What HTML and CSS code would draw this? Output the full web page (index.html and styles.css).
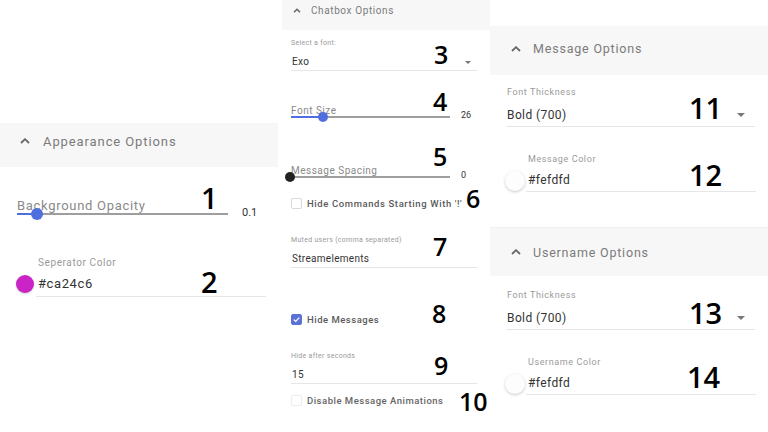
FILE: index.html
```html
<!DOCTYPE html>
<html>
<head>
<meta charset="utf-8">
<link rel="stylesheet" href="styles.css">
</head>
<body>
<div class="page">

  <!-- LEFT PANEL -->
  <section class="panel panel-left">
    <div class="header header-lg">
      <svg class="chev" width="10" height="6" viewBox="0 0 10 6"><polyline points="1,5 5,1.2 9,5" fill="none" stroke="#666" stroke-width="1.8"/></svg>
      <span class="title">Appearance Options</span>
    </div>
    <div class="body body-left">
      <div class="slider slider-lg s-opacity">
        <div class="s-label">Background Opacity</div>
        <div class="s-row">
          <div class="track"><div class="fill" style="width:20px"></div><div class="thumb" style="left:20px"></div></div>
          <span class="s-val">0.1</span>
        </div>
      </div>
      <div class="colorfield cf-lg cf-sep">
        <span class="swatch swatch-mag"></span>
        <div class="cf-input">
          <div class="f-label">Seperator Color</div>
          <div class="f-value">#ca24c6</div>
        </div>
      </div>
    </div>
    <span class="num num-lg n1">1</span>
    <span class="num num-lg n2">2</span>
  </section>

  <!-- MIDDLE PANEL -->
  <section class="panel panel-mid">
    <div class="header header-sm">
      <svg class="chev" width="8" height="5" viewBox="0 0 8 5"><polyline points="1,4.2 4,1.2 7,4.2" fill="none" stroke="#666" stroke-width="1.5"/></svg>
      <span class="title">Chatbox Options</span>
    </div>
    <div class="body body-mid">
      <div class="field field-sm f-font">
        <div class="f-label">Select a font:</div>
        <div class="f-value">Exo <span class="caret"></span></div>
      </div>
      <div class="slider slider-sm s-size">
        <div class="s-label">Font Size</div>
        <div class="s-row">
          <div class="track"><div class="fill" style="width:32px"></div><div class="thumb" style="left:32px"></div></div>
          <span class="s-val">26</span>
        </div>
      </div>
      <div class="slider slider-sm s-spacing">
        <div class="s-label">Message Spacing</div>
        <div class="s-row">
          <div class="track"><div class="thumb thumb-dark" style="left:-1px"></div></div>
          <span class="s-val">0</span>
        </div>
      </div>
      <label class="check c-cmd"><span class="box"></span><span>Hide Commands Starting With '!'</span></label>
      <div class="field field-sm f-muted">
        <div class="f-label">Muted users (comma separated)</div>
        <div class="f-value">Streamelements</div>
      </div>
      <label class="check c-hide"><span class="box box-on"><svg width="9" height="9" viewBox="0 0 9 9"><polyline points="1.8,4.6 3.7,6.4 7.3,2.6" fill="none" stroke="#fff" stroke-width="1.3"/></svg></span><span>Hide Messages</span></label>
      <div class="field field-sm f-secs">
        <div class="f-label">Hide after seconds</div>
        <div class="f-value">15</div>
      </div>
      <label class="check c-anim"><span class="box box-faint"></span><span>Disable Message Animations</span></label>
    </div>
    <span class="num num-sm n3">3</span>
    <span class="num num-sm n4">4</span>
    <span class="num num-sm n5">5</span>
    <span class="num num-sm n6">6</span>
    <span class="num num-sm n7">7</span>
    <span class="num num-sm n8">8</span>
    <span class="num num-sm n9">9</span>
    <span class="num num-sm n10">10</span>
  </section>

  <!-- RIGHT PANEL -->
  <section class="panel panel-right">
    <div class="group group-msg">
      <div class="header header-md header-msg">
        <svg class="chev" width="10" height="6" viewBox="0 0 10 6"><polyline points="1,5 5,1.2 9,5" fill="none" stroke="#666" stroke-width="1.8"/></svg>
        <span class="title">Message Options</span>
      </div>
      <div class="body body-right">
        <div class="field field-md f-thick">
          <div class="f-label">Font Thickness</div>
          <div class="f-value">Bold (700) <span class="caret"></span></div>
        </div>
        <div class="colorfield cf-md cf-msg">
          <span class="swatch swatch-white"></span>
          <div class="cf-input">
            <div class="f-label">Message Color</div>
            <div class="f-value">#fefdfd</div>
          </div>
        </div>
      </div>
    </div>
    <div class="group group-user">
      <div class="header header-md">
        <svg class="chev" width="10" height="6" viewBox="0 0 10 6"><polyline points="1,5 5,1.2 9,5" fill="none" stroke="#666" stroke-width="1.8"/></svg>
        <span class="title">Username Options</span>
      </div>
      <div class="body body-right">
        <div class="field field-md f-thick2">
          <div class="f-label">Font Thickness</div>
          <div class="f-value">Bold (700) <span class="caret"></span></div>
        </div>
        <div class="colorfield cf-md cf-user">
          <span class="swatch swatch-white"></span>
          <div class="cf-input">
            <div class="f-label">Username Color</div>
            <div class="f-value">#fefdfd</div>
          </div>
        </div>
      </div>
    </div>
    <span class="num num-lg n11">11</span>
    <span class="num num-lg n12">12</span>
    <span class="num num-lg n13">13</span>
    <span class="num num-lg n14">14</span>
  </section>

</div>
</body>
</html>
```

FILE: styles.css
```css
* { box-sizing: border-box; }
html, body { margin: 0; padding: 0; background: #fff; }
body { font-family: Roboto, "Liberation Sans", sans-serif; color: #333; }

.page {
  display: flex;
  width: 768px;
  height: 432px;
  overflow: hidden;
}

.panel { position: relative; height: 432px; }
.panel-left { width: 278px; padding-top: 123px; }
.panel-mid { width: 208px; margin-left: 4px; }
.panel-right { width: 278px; padding-top: 26px; }

/* headers */
.header {
  display: flex;
  align-items: center;
  background: #f7f7f7;
}
.header .title { color: #7b7b7b; }
.header-lg { height: 44px; padding-left: 20px; padding-bottom: 8px; }
.header-lg .chev { margin-right: 13px; }
.header-lg .title { font-size: 13px; letter-spacing: 0.9px; }

.header-sm { height: 30px; padding-left: 11px; padding-bottom: 10px; }
.header-sm .chev { margin-right: 10px; }
.header-sm .title { font-size: 10px; letter-spacing: 0.6px; }

.header-md { height: 48px; padding-left: 21px; }
.header-msg { height: 49px; padding-bottom: 4px; }
.header-md .chev { margin-right: 12px; }
.header-md .title { font-size: 12.5px; letter-spacing: 0.8px; }

/* bodies */
.body-left { padding: 0 12px 0 17px; }
.body-mid { padding: 0 13px 0 9px; }
.body-right { padding: 0 12px 0 17px; }

/* sliders */
.s-label { color: #8a8a8a; white-space: nowrap; }
.s-row { display: flex; align-items: center; }
.track { position: relative; height: 2px; background: #9e9e9e; }
.fill { position: absolute; left: 0; top: 0; height: 2px; background: #4f6fe0; }
.thumb {
  position: absolute;
  top: 50%;
  border-radius: 50%;
  background: #4f6fe0;
  transform: translate(-50%, -50%);
}
.thumb-dark { background: #222; }
.s-val { color: #333; }

.slider-lg .s-label { font-size: 13px; line-height: 14px; letter-spacing: 0.7px; }
.slider-lg .s-row { height: 10px; margin-top: -4px; }
.slider-lg .track { width: 211px; margin-right: 14px; }
.slider-lg .thumb { width: 12px; height: 12px; }
.slider-lg .s-val { font-size: 11px; margin-top: -3px; }
.s-opacity { margin-top: 32px; }

.slider-sm .s-label { font-size: 10px; line-height: 12px; letter-spacing: 0.5px; }
.slider-sm .s-row { height: 8px; margin-top: -4px; }
.slider-sm .track { width: 159px; margin-right: 11px; }
.slider-sm .thumb { width: 10px; height: 10px; }
.slider-sm .s-val { font-size: 9px; margin-top: -4px; }
.s-size { margin-top: 34px; }
.s-spacing { margin-top: 44px; }

/* text fields */
.field { border-bottom: 1px solid #e6e6e6; }
.f-label { color: #9a9a9a; white-space: nowrap; }
.f-value { color: #333; display: flex; align-items: center; white-space: nowrap; }
.caret {
  margin-left: auto;
  width: 0; height: 0;
  border-left: 4px solid transparent;
  border-right: 4px solid transparent;
  border-top: 4px solid #777;
}

.field-sm .f-label { font-size: 7px; line-height: 9px; letter-spacing: 0.3px; }
.field-sm .f-value { font-size: 10px; line-height: 12px; margin-top: 8px; padding: 0 1px 2px; letter-spacing: 0.3px; }
.field-sm .caret { margin-right: 5px; border-left-width: 3.5px; border-right-width: 3.5px; border-top-width: 3.5px; }
.f-font { margin-top: 9px; }
.f-muted { margin-top: 27px; }
.f-secs { margin-top: 27px; }

.field-md { margin-right: 1px; margin-left: -1px; }
.field-md .f-label { font-size: 9px; line-height: 11px; letter-spacing: 0.6px; padding-left: 1px; }
.field-md .f-value { font-size: 12px; line-height: 14px; margin-top: 10px; padding: 0 1px 4px; letter-spacing: 0.4px; }
.field-md .caret { margin-right: 9px; }
.f-thick { margin-top: 12px; }
.f-thick2 { margin-top: 14px; }

/* color fields */
.colorfield { display: flex; align-items: flex-end; }
.swatch { flex: none; border-radius: 50%; }
.swatch-mag { background: #ca24c6; box-shadow: 0 1px 2px rgba(0,0,0,0.18); }
.swatch-white { background: #fefdfd; box-shadow: 0 1px 3px rgba(0,0,0,0.22); }
.cf-input { border-bottom: 1px solid #e6e6e6; }

.cf-lg .swatch { width: 18px; height: 18px; margin-left: -1px; margin-bottom: 4px; }
.cf-lg .cf-input { width: 230px; margin-left: 2px; }
.cf-lg .f-label { font-size: 10px; line-height: 12px; letter-spacing: 0.6px; padding-left: 2px; }
.cf-lg .f-value { font-size: 13px; line-height: 16px; margin-top: 7px; padding: 0 2px 4px; letter-spacing: 0.6px; }
.cf-sep { margin-top: 38px; }

.cf-md .swatch { width: 20px; height: 20px; margin-left: -2px; margin-bottom: 1px; }
.cf-md .cf-input { width: 230px; margin-left: 1px; }
.cf-md .f-label { font-size: 9px; line-height: 11px; letter-spacing: 0.6px; padding-left: 2px; }
.cf-md .f-value { font-size: 12px; line-height: 14px; margin-top: 8px; padding: 0 2px 4px; letter-spacing: 0.4px; }
.cf-msg { margin-top: 27px; }
.cf-user { margin-top: 27px; }

.group-msg { height: 202px; border-bottom: 1px solid #f1f1f1; }
.group-user { margin-top: 0; }

/* checkboxes */
.check {
  display: flex;
  align-items: center;
  height: 12px;
  font-size: 9.5px;
  font-weight: 500;
  color: #5a5a5a;
  letter-spacing: 0.5px;
  white-space: nowrap;
}
.box {
  flex: none;
  width: 11px;
  height: 11px;
  border: 1px solid #d9d9d9;
  border-radius: 2px;
  margin-right: 5px;
  display: flex;
  align-items: center;
  justify-content: center;
}
.box-on { background: #5a72d6; border-color: #5a72d6; }
.box-faint { border-color: #ececec; }
.c-cmd { margin-top: 16px; letter-spacing: 0.6px; }
.c-hide { margin-top: 45px; }
.c-anim { margin-top: 10px; }
.c-anim span:last-child { color: #666; }

/* annotation numbers */
.num {
  position: absolute;
  font-family: "Open Sans", Lato, sans-serif;
  font-weight: 600;
  color: #000;
  line-height: 1;
}
.num-lg { font-size: 29px; }
.num-sm { font-size: 25px; }
.n1 { left: 201px; top: 183px; }
.n2 { left: 201px; top: 267px; }
.n3 { left: 152px; top: 42px; }
.n4 { left: 151px; top: 89px; }
.n5 { left: 151px; top: 144px; }
.n6 { left: 184px; top: 186px; }
.n7 { left: 151px; top: 234px; }
.n8 { left: 150px; top: 301px; }
.n9 { left: 152px; top: 353px; }
.n10 { left: 177px; top: 389px; }
.n11 { left: 199px; top: 93px; }
.n12 { left: 199px; top: 160px; }
.n13 { left: 199px; top: 298px; }
.n14 { left: 197px; top: 362px; }
```
